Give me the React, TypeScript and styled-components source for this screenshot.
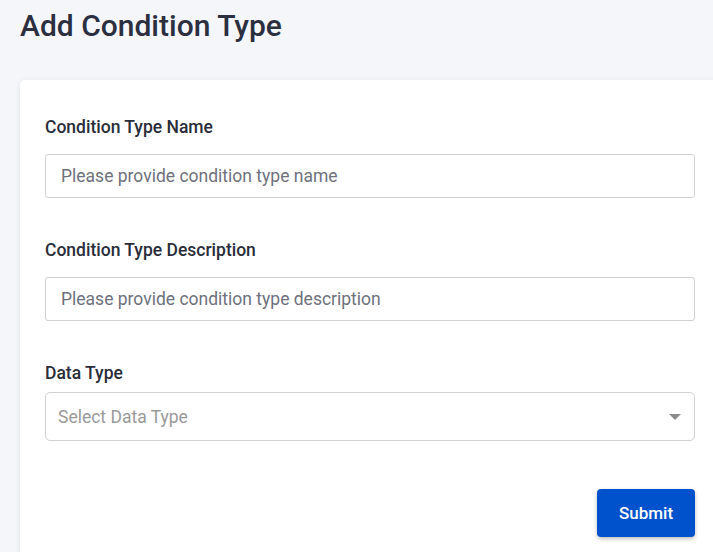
import React from "react";
import styled, { createGlobalStyle } from "styled-components";

const Global = createGlobalStyle`
  html, body {
    margin: 0;
    padding: 0;
    background: #f5f6fa;
    font-family: Roboto, "Liberation Sans", Arial, sans-serif;
    overflow: hidden;
  }
  * { box-sizing: border-box; }
`;

const Page = styled.div`
  width: 713px;
  height: 552px;
  padding: 7px 0 0 20px;
  overflow: hidden;
`;

const Title = styled.h1`
  margin: 0;
  font-size: 30px;
  line-height: 38px;
  font-weight: 500;
  color: #2b2f40;
`;

const Card = styled.div`
  margin-top: 35px;
  width: 720px;
  background: #ffffff;
  border-radius: 5px;
  box-shadow: 0 1px 6px rgba(0, 0, 0, 0.08);
  padding: 37px 25px 40px 25px;
  display: flex;
  flex-direction: column;
`;

const Field = styled.div<{ $last?: boolean }>`
  display: flex;
  flex-direction: column;
  gap: 17px;
  margin-bottom: ${(p) => (p.$last ? "48px" : "42px")};
`;

const Label = styled.label`
  font-size: 17.5px;
  line-height: 20px;
  font-weight: 500;
  color: #2a2d3a;
`;

const TextInput = styled.input`
  width: 650px;
  height: 44px;
  border: 1px solid #cfd0d4;
  border-radius: 3px;
  padding: 0 15px;
  font-family: Roboto, "Liberation Sans", Arial, sans-serif;
  font-size: 17.5px;
  color: #333;
  outline: none;
  &::placeholder {
    color: #6e717c;
  }
`;

const SelectBox = styled.div`
  width: 650px;
  height: 49px;
  border: 1px solid #cfd0d4;
  border-radius: 5px;
  padding: 0 12px;
  display: flex;
  align-items: center;
  justify-content: space-between;
  font-size: 17.5px;
  color: #9a9a9a;
  margin-top: -8px;
`;

const Caret = styled.span`
  width: 0;
  height: 0;
  border-left: 6px solid transparent;
  border-right: 6px solid transparent;
  border-top: 6px solid #8c8c8c;
  margin-right: 1px;
`;

const Actions = styled.div`
  display: flex;
  width: 650px;
  justify-content: flex-end;
`;

const Button = styled.button`
  width: 98px;
  height: 48px;
  border: none;
  border-radius: 4px;
  background: #0052cc;
  color: #fff;
  font-family: Roboto, "Liberation Sans", Arial, sans-serif;
  font-size: 17px;
  font-weight: 500;
  box-shadow: 0 2px 4px rgba(0, 0, 0, 0.25);
  cursor: pointer;
`;

export default function App() {
  return (
    <>
      <Global />
      <Page>
        <Title>Add Condition Type</Title>
        <Card>
          <Field>
            <Label>Condition Type Name</Label>
            <TextInput placeholder="Please provide condition type name" />
          </Field>
          <Field>
            <Label>Condition Type Description</Label>
            <TextInput placeholder="Please provide condition type description" />
          </Field>
          <Field $last>
            <Label>Data Type</Label>
            <SelectBox>
              <span>Select Data Type</span>
              <Caret />
            </SelectBox>
          </Field>
          <Actions>
            <Button>Submit</Button>
          </Actions>
        </Card>
      </Page>
    </>
  );
}
